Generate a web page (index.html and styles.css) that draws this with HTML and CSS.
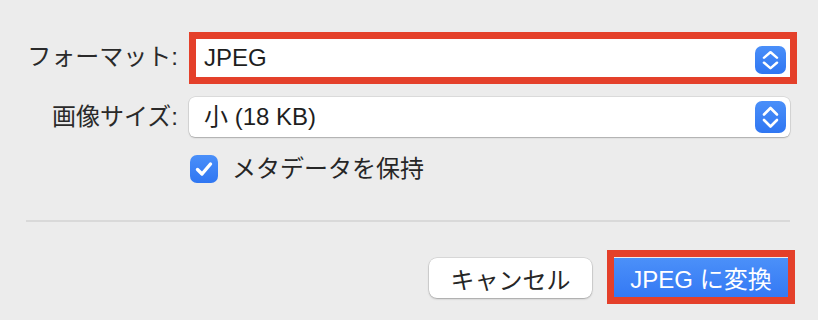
FILE: index.html
```html
<!DOCTYPE html>
<html lang="ja">
<head>
<meta charset="utf-8">
<link rel="stylesheet" href="styles.css">
</head>
<body>
<div class="dialog">
  <div class="form">
    <div class="label">フォーマット:</div>
    <div class="popup highlighted">
      <span class="value">JPEG</span>
      <span class="stepper small">
        <svg viewBox="0 0 31 32" width="31" height="28" preserveAspectRatio="none"><path d="M9 13.5 L15.5 7 L22 13.5 M9 19 L15.5 25.5 L22 19" fill="none" stroke="#fff" stroke-width="2.6" stroke-linecap="round" stroke-linejoin="round"/></svg>
      </span>
    </div>
    <div class="label">画像サイズ:</div>
    <div class="popup">
      <span class="value">小 (18 KB)</span>
      <span class="stepper">
        <svg viewBox="0 0 31 32" width="31" height="32"><path d="M9 13.5 L15.5 7 L22 13.5 M9 19 L15.5 25.5 L22 19" fill="none" stroke="#fff" stroke-width="2.6" stroke-linecap="round" stroke-linejoin="round"/></svg>
      </span>
    </div>
    <div class="spacer"></div>
    <label class="check">
      <span class="box">
        <svg viewBox="0 0 28 28" width="28" height="28"><path d="M7.5 14.5 L12 19 L20.5 9" fill="none" stroke="#fff" stroke-width="3.4" stroke-linecap="round" stroke-linejoin="round"/></svg>
      </span>
      <span class="check-text">メタデータを保持</span>
    </label>
  </div>
  <div class="divider"></div>
  <div class="buttons">
    <button class="btn cancel">キャンセル</button>
    <button class="btn primary highlighted">JPEG に変換</button>
  </div>
</div>
</body>
</html>
```
FILE: styles.css
```css
html, body {
  margin: 0;
  padding: 0;
  background: #ececec;
}
body {
  width: 818px;
  height: 320px;
  overflow: hidden;
  font-family: "Liberation Sans", "Noto Sans CJK JP", sans-serif;
  color: #262626;
}
.dialog {
  padding-top: 36px;
}
.form {
  display: grid;
  grid-template-columns: 178px 601px;
  column-gap: 11px;
  align-items: center;
}
.label {
  font-size: 24px;
  text-align: right;
  line-height: 40px;
  color: #2a2a2a;
}
.popup {
  position: relative;
  height: 40px;
  background: #fff;
  border-radius: 6px;
  box-shadow: 0 0 0 0.5px rgba(0,0,0,0.14), 0 1px 1.5px rgba(0,0,0,0.22);
  display: flex;
  align-items: center;
  justify-content: space-between;
  padding: 0 4px 0 15px;
  font-size: 24px;
  color: #1e1e1e;
}
.popup + .label { margin-top: 20px; }
.popup:nth-of-type(4) { margin-top: 20px; }
.popup.highlighted {
  border-radius: 0;
  box-shadow: none;
  height: 41px;
}
.popup.highlighted .value {
  padding-top: 3px;
}
.highlighted::after {
  content: "";
  position: absolute;
  border: 7px solid #e4402a;
  pointer-events: none;
}
.popup.highlighted::after {
  left: 0;
  top: -4px;
  right: -7px;
  bottom: -7px;
}
.value {
  line-height: 40px;
}
.stepper {
  width: 31px;
  height: 32px;
  border-radius: 7px;
  background: linear-gradient(#4a8ff9, #2f76f2);
  display: flex;
  align-items: center;
  justify-content: center;
}
.stepper.small {
  height: 28px;
  margin-top: 6px;
}
.stepper svg { display: block; }
.spacer { height: 28px; margin-top: 18px; }
.check {
  margin-top: 18px;
  display: flex;
  align-items: center;
  gap: 14px;
  padding-left: 1px;
}
.box {
  width: 28px;
  height: 28px;
  border-radius: 7px;
  background: linear-gradient(#4a8ff9, #2f76f2);
  display: block;
}
.box svg { display: block; }
.check-text {
  font-size: 24px;
  color: #262626;
  line-height: 28px;
}
.divider {
  margin: 37px 28px 0 26px;
  height: 2px;
  background: #d9d9d9;
}
.buttons {
  display: flex;
  justify-content: flex-end;
  gap: 22px;
  padding-right: 30px;
  margin-top: 36px;
}
.btn {
  font-family: "Liberation Sans", "Noto Sans CJK JP", sans-serif;
  font-size: 24px;
  border: none;
  padding: 0;
  margin: 0;
}
.cancel {
  width: 163px;
  height: 40px;
  background: #fff;
  color: #262626;
  border-radius: 8px;
  box-shadow: 0 0 0 0.5px rgba(0,0,0,0.15), 0 1px 2px rgba(0,0,0,0.25);
}
.primary {
  position: relative;
  width: 174px;
  height: 39px;
  color: #fff;
  background: linear-gradient(#4b90f9, #3479f4);
  border-radius: 0;
}
.primary.highlighted::after {
  left: -7px;
  right: -7px;
  top: -8px;
  bottom: -7px;
}
```
